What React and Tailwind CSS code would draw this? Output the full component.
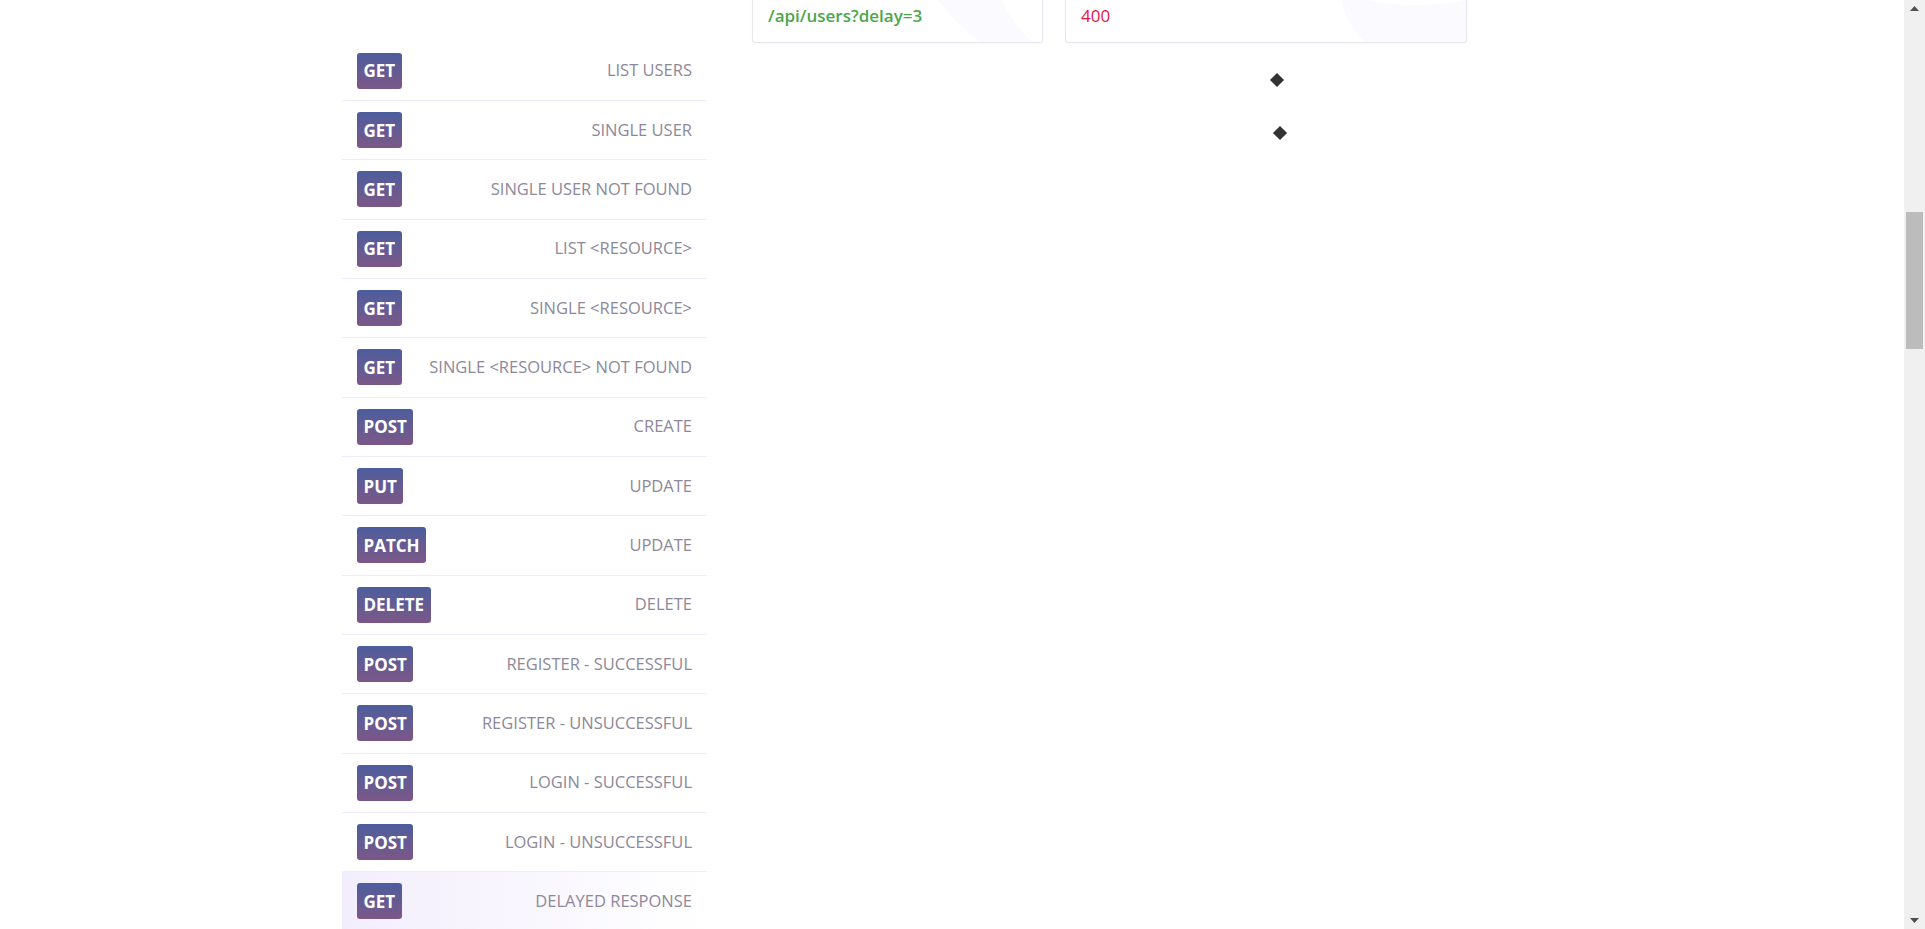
import React from "react";

const endpoints = [
  { method: "GET", label: "LIST USERS" },
  { method: "GET", label: "SINGLE USER" },
  { method: "GET", label: "SINGLE USER NOT FOUND" },
  { method: "GET", label: "LIST <RESOURCE>" },
  { method: "GET", label: "SINGLE <RESOURCE>" },
  { method: "GET", label: "SINGLE <RESOURCE> NOT FOUND" },
  { method: "POST", label: "CREATE" },
  { method: "PUT", label: "UPDATE" },
  { method: "PATCH", label: "UPDATE" },
  { method: "DELETE", label: "DELETE" },
  { method: "POST", label: "REGISTER - SUCCESSFUL" },
  { method: "POST", label: "REGISTER - UNSUCCESSFUL" },
  { method: "POST", label: "LOGIN - SUCCESSFUL" },
  { method: "POST", label: "LOGIN - UNSUCCESSFUL" },
  { method: "GET", label: "DELAYED RESPONSE", active: true },
];

const EndpointRow = ({ method, label, active }) => (
  <li
    className={`flex h-[59.33px] items-center justify-between border-b border-[#efeafc] pl-[15px] pr-[15px] ${
      active ? "bg-gradient-to-r from-[#f3eefd] to-white" : ""
    }`}
  >
    <span className="inline-flex h-[36px] items-center rounded-[3px] bg-gradient-to-b from-[#4b5d9d] to-[#7b5787] px-[6.5px] text-[17px] font-bold leading-none text-white">
      {method}
    </span>
    <span className="text-[16.5px] font-normal text-[#8d889a]">{label}</span>
  </li>
);

const Card = ({ width, children, decor }) => (
  <div
    className={`relative h-[43px] overflow-hidden rounded-b-[4px] border border-t-0 border-[#e8e6ee] bg-white shadow-[0_1px_2px_rgba(0,0,0,0.03)] ${width}`}
  >
    <svg className="absolute inset-0 h-full w-full" preserveAspectRatio="none">
      {decor}
    </svg>
    <div className="relative px-[15px] pt-[3px]">{children}</div>
  </div>
);

const Scrollbar = () => (
  <div className="flex w-[21px] flex-col bg-[#f0f0f0]">
    <div className="flex h-[17px] items-center justify-center">
      <svg width="9" height="5" viewBox="0 0 9 5">
        <path d="M0 5 L4.5 0 L9 5 Z" fill="#505050" />
      </svg>
    </div>
    <div className="h-[195px]" />
    <div className="mx-[2px] h-[137px] bg-[#bcbcbc]" />
    <div className="flex-1" />
    <div className="flex h-[17px] items-center justify-center">
      <svg width="9" height="5" viewBox="0 0 9 5">
        <path d="M0 0 L9 0 L4.5 5 Z" fill="#505050" />
      </svg>
    </div>
  </div>
);

export default function App() {
  return (
    <div
      className="flex h-[929px] overflow-hidden bg-white"
      style={{ fontFamily: '"Open Sans", "Noto Sans", sans-serif' }}
    >
      <div className="min-w-0 flex-1">
        <div className="mx-auto flex w-[1220px]">
          <aside className="w-[365px] pt-[41.67px]">
            <ul>
              {endpoints.map((e, i) => (
                <EndpointRow key={i} {...e} />
              ))}
            </ul>
          </aside>

          <main className="ml-[45px] flex-1">
            <div className="flex gap-[22px]">
              <Card
                width="w-[291px]"
                decor={
                  <>
                    <path d="M185 0 C200 20 215 35 230 43 L290 43 L290 0 Z" fill="#fbfaff" />
                    <path d="M248 0 C258 18 268 32 280 43 L290 43 L290 0 Z" fill="#ffffff" />
                  </>
                }
              >
                <span className="text-[17px] font-semibold text-[#4ca64a]">
                  /api/users?delay=3
                </span>
              </Card>
              <Card
                width="w-[402px]"
                decor={
                  <path d="M275 0 C280 20 290 35 300 43 L400 43 L400 0 C380 5 335 8 300 0 Z" fill="#fbfaff" />
                }
              >
                <span className="text-[17px] text-[#e0164c]">400</span>
              </Card>
            </div>

            <div className="flex flex-col pl-[518px] pt-[30px]">
              <span className="block h-[14px] w-[14px] p-[2px]">
                <span className="block h-[10px] w-[10px] rotate-45 bg-[#333333]" />
              </span>
              <span className="ml-[3px] mt-[39px] block h-[14px] w-[14px] p-[2px]">
                <span className="block h-[10px] w-[10px] rotate-45 bg-[#333333]" />
              </span>
            </div>
          </main>
        </div>
      </div>
      <Scrollbar />
    </div>
  );
}
